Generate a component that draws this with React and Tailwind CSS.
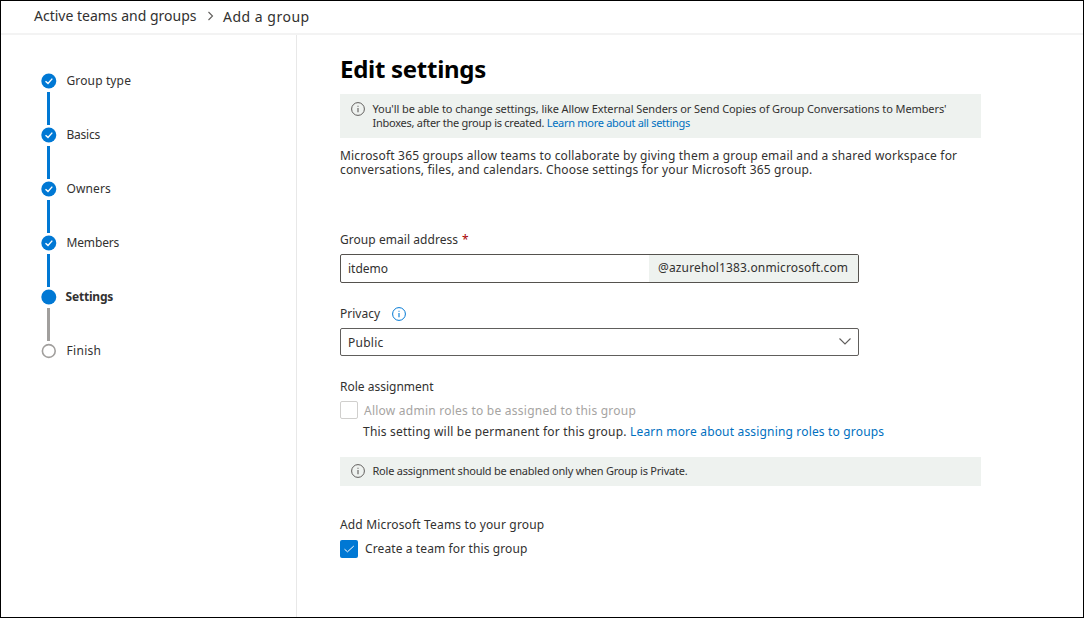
import React from "react";

const STEPS = [
  { label: "Group type", state: "done", tracking: "tracking-[0.13px]" },
  { label: "Basics", state: "done", tracking: "tracking-[-0.25px]" },
  { label: "Owners", state: "done", tracking: "tracking-[0.1px]" },
  { label: "Members", state: "done", tracking: "tracking-[-0.15px]" },
  { label: "Settings", state: "current", tracking: "tracking-[-0.2px]" },
  { label: "Finish", state: "todo", tracking: "tracking-[0.3px]" },
];

function StepMarker({ state }) {
  return (
    <svg width="16" height="16" viewBox="0 0 16 16" className="block shrink-0">
      {state === "todo" ? (
        <circle cx="7.8" cy="8" r="6.4" fill="#fff" stroke="#a19f9d" strokeWidth="1.6" />
      ) : (
        <circle cx="7.8" cy="8" r="7.5" fill="#0078d4" />
      )}
      {state === "done" && (
        <path d="M4.5 8.2 L7 10.4 L11.3 5.6" fill="none" stroke="#fff" strokeWidth="1.4" />
      )}
    </svg>
  );
}

function Step({ step, last }) {
  const current = step.state === "current";
  return (
    <li className="flex h-[54px] gap-[9.5px]">
      <div className="flex w-4 flex-col items-center">
        <StepMarker state={step.state} />
        {!last && (
          <span
            className={`mt-[3px] mr-px h-[33px] w-[2.5px] shrink-0 ${current ? "bg-[#a19f9d]" : "bg-[#0078d4]"}`}
          />
        )}
      </div>
      <span className={`h-4 text-[12px] leading-4 ${step.tracking} ${current ? "-ml-px font-bold" : ""}`}>
        {step.label}
      </span>
    </li>
  );
}

function InfoIcon({ className }) {
  return (
    <svg width="14" height="14" viewBox="0 0 14 14" fill="none" className={`block shrink-0 ${className}`}>
      <circle cx="7" cy="7" r="6.4" stroke="currentColor" strokeWidth="1" />
      <path d="M7 6v4.3M7 3.7v1.1" stroke="currentColor" strokeWidth="1.1" />
    </svg>
  );
}

export default function App() {
  return (
    <div className="flex h-[618px] w-[1084px] flex-col overflow-hidden border border-black bg-white font-['Noto_Sans',sans-serif] text-[12px] leading-[14px] whitespace-nowrap text-[#323130]">
      <header className="flex h-[34px] shrink-0 border-b-2 border-[#f3f3f3] pl-[33px] text-[14px] leading-5">
        <span className="mt-[5px] w-[163px]">Active teams and groups</span>
        <svg width="8" height="10" viewBox="0 0 8 10" className="mt-[10px] ml-[10px] shrink-0" fill="none">
          <path d="M1.5 1l4 4-4 4" stroke="#605e5c" strokeWidth="1.1" />
        </svg>
        <span className="mt-[6px] ml-[8px] tracking-[0.5px]">Add a group</span>
      </header>

      <div className="flex min-h-0 flex-1">
        <nav className="w-[296px] shrink-0 border-r border-[#e8e8e8] pt-[38px] pl-10">
          <ol>
            {STEPS.map((step, i) => (
              <Step key={step.label} step={step} last={i === STEPS.length - 1} />
            ))}
          </ol>
        </nav>

        <main className="pl-[43px]">
          <h1 className="mt-[18px] h-8 text-[24px] leading-8 font-bold tracking-[-0.28px] text-black">Edit settings</h1>

          <div className="mt-[9px] flex h-[44px] w-[641px] bg-[#eef2ef] pt-2 pl-[11px] text-[11px]">
            <InfoIcon className="text-[#605e5c]" />
            <div className="ml-[7.5px]">
              <p className="tracking-[-0.09px]">
                You'll be able to change settings, like Allow External Senders or Send Copies of Group Conversations to
                Members'
              </p>
              <p>
                <span className="tracking-[-0.26px]">Inboxes, after the group is created. </span>
                <a className="tracking-[-0.29px] text-[#0070c0]">Learn more about all settings</a>
              </p>
            </div>
          </div>

          <p className="mt-[11px]">
            <span className="tracking-[0.18px]">
              Microsoft 365 groups allow teams to collaborate by giving them a group email and a shared workspace for
            </span>
            <br />
            <span className="tracking-[0.17px]">
              conversations, files, and calendars. Choose settings for your Microsoft 365 group.
            </span>
          </p>

          <label className="mt-[56px] flex h-[14px] gap-1">
            <span className="tracking-[0.05px]">Group email address</span>
            <span className="text-[#a80000]">*</span>
          </label>
          <div className="mt-[7px] flex h-[29px] w-[519px] items-center overflow-hidden rounded-[2px] border border-[#55524e]">
            <span className="w-[308px] pl-[7px]">itdemo</span>
            <span className="h-full flex-1 bg-[#eef2ef] pl-[9px] leading-[25px] tracking-[0.14px]">
              @azurehol1383.onmicrosoft.com
            </span>
          </div>

          <div className="mt-[24px] flex h-[14px] items-center">
            <span className="w-[52px]">Privacy</span>
            <InfoIcon className="text-[#0078d4]" />
          </div>
          <div className="mt-[7px] flex h-[28px] w-[519px] justify-between rounded-[2px] border border-[#605e5c] pr-[6px] pl-[7px]">
            <span className="pt-[7px] tracking-[0.25px]">Public</span>
            <svg width="14" height="9" viewBox="0 0 14 9" fill="none" className="mt-[8px]">
              <path d="M1.5 1.5L7 7l5.5-5.5" stroke="#605e5c" strokeWidth="1.1" />
            </svg>
          </div>

          <p className="mt-[24px]">Role assignment</p>
          <div className="mt-[7px] flex h-[18px] gap-[6px] text-[#a6a4a2]">
            <span className="h-[18px] w-[18px] rounded-[2px] border border-[#d0cfcd]" />
            <span className="pt-[3px] tracking-[0.24px]">Allow admin roles to be assigned to this group</span>
          </div>
          <p className="mt-[6px] pl-[23px]">
            <span className="tracking-[0.21px]">This setting will be permanent for this group. </span>
            <a className="tracking-[0.17px] text-[#0070c0]">Learn more about assigning roles to groups</a>
          </p>

          <div className="mt-[18px] flex h-[29px] w-[641px] gap-[7.5px] bg-[#eef2ef] pt-[7px] pl-[11px] text-[11px]">
            <InfoIcon className="text-[#605e5c]" />
            <span className="tracking-[-0.22px]">Role assignment should be enabled only when Group is Private.</span>
          </div>

          <p className="mt-[32px] tracking-[0.16px]">Add Microsoft Teams to your group</p>
          <div className="mt-[8px] flex h-[18px] items-center gap-[7px]">
            <svg width="18" height="18" viewBox="0 0 18 18" className="block">
              <rect width="18" height="18" rx="2" fill="#0078d4" />
              <path d="M4.5 9.2l3 2.6 6.3-5.8" fill="none" stroke="#fff" strokeWidth="1" />
            </svg>
            <span className="tracking-[0.11px]">Create a team for this group</span>
          </div>
        </main>
      </div>
    </div>
  );
}
